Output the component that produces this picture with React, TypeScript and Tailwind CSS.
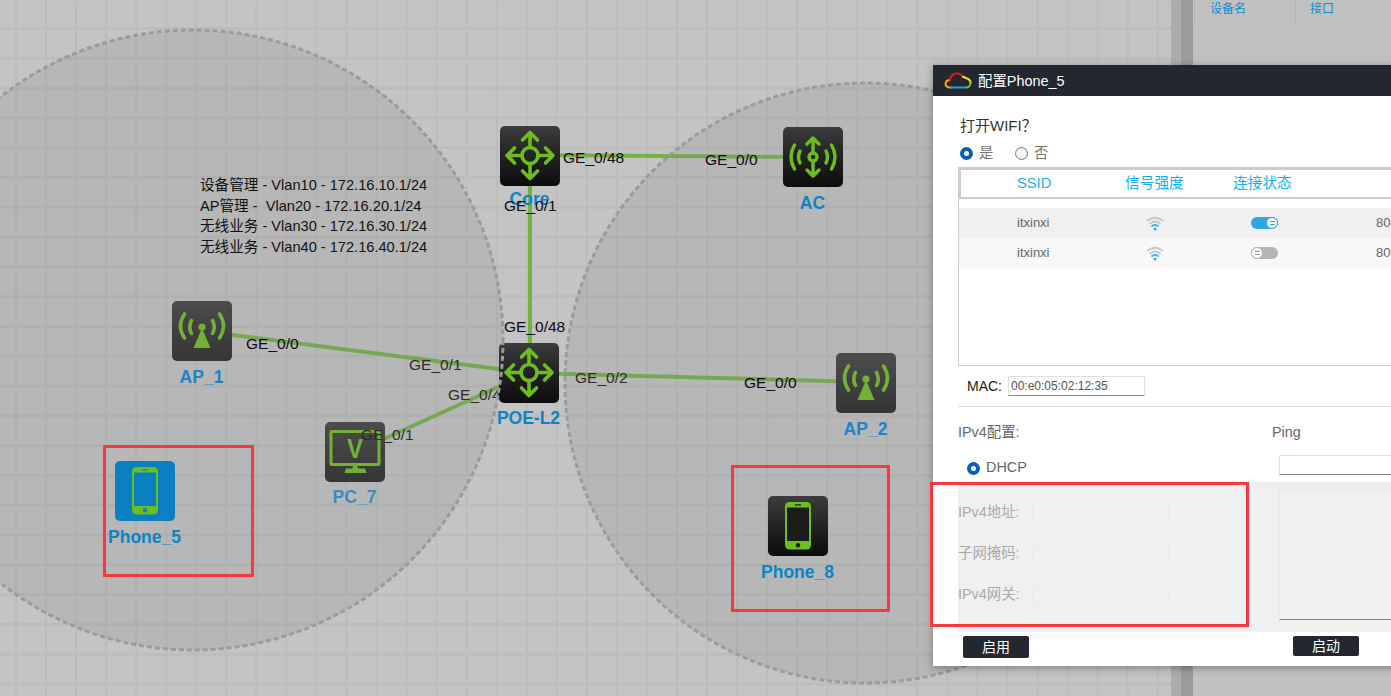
import React from "react";

const G = "#6ebd1f";
const cjk = "font-['Liberation_Sans','Noto_Sans_CJK_SC',sans-serif]";

function RouterGlyph() {
  return (
    <g fill="none" stroke={G} strokeWidth="3.6" strokeLinecap="round" strokeLinejoin="round">
      <circle cx="30" cy="29.500" r="8" />
      <path d="M30 21V7M22.500 14l7.500-7.500L37.500 14" />
      <path d="M30 38v14M22.500 45l7.500 7.500L37.500 45" />
      <path d="M21.500 29.500H7.500M14.500 22L7 29.500l7.500 7.500" />
      <path d="M38.500 29.500h14M45.500 22l7.500 7.500L45.500 37" />
    </g>
  );
}
function AcGlyph() {
  return (
    <g fill="none" stroke={G} strokeWidth="3.4" strokeLinecap="round" strokeLinejoin="round">
      <circle cx="30" cy="30" r="4" />
      <path d="M30 26V11M24 17l6-6 6 6M30 34v15M24 43l6 6 6-6" />
      <path d="M17 24q-3 6 0 12M11.500 18q-7 12 0 24" />
      <path d="M43 24q3 6 0 12M48.500 18q7 12 0 24" />
    </g>
  );
}
function ApGlyph() {
  return (
    <g>
      <circle cx="30" cy="26" r="3.600" fill={G} />
      <path d="M30 27l8.500 20h-17z" fill={G} />
      <g fill="none" stroke={G} strokeWidth="3.600" strokeLinecap="round">
        <path d="M19.500 19.500q-3.500 6.500 0 13M12.500 13q-8 12 0 24" />
        <path d="M40.500 19.500q3.500 6.500 0 13M47.500 13q8 12 0 24" />
      </g>
    </g>
  );
}
function PcGlyph() {
  return (
    <g>
      <rect x="6" y="9.500" width="48" height="33" rx="1" fill="none" stroke={G} strokeWidth="3" />
      <text transform="translate(30 36) scale(0.85 1)" textAnchor="middle" fontFamily="Liberation Sans" fontWeight="700" fontSize="28" fill={G}>V</text>
      <path d="M28 44h4l1.500 2.500H40l1.500 4.500h-22l1.500-4.500h6.500z" fill={G} />
    </g>
  );
}
function PhoneGlyph({ screen }: { screen: string }) {
  return (
    <g>
      <rect x="17" y="6" width="26" height="47.500" rx="4.500" fill={G} />
      <rect x="19" y="11.500" width="22" height="33.500" fill={screen} />
      <rect x="27" y="8.300" width="6" height="1.200" fill={screen} />
      <circle cx="30" cy="49.200" r="2.200" fill={screen} />
    </g>
  );
}

function Node({
  left, top, grad, children, label, labelTop, labelColor = "#0b84c6",
}: {
  left: number; top: number; grad: string; children: React.ReactNode; label: string; labelTop: number; labelColor?: string;
}) {
  return (
    <>
      <svg viewBox="0 0 60 60" width="60" height="60" className={`absolute rounded-[5px] ${grad}`} style={{ left, top }}>
        {children}
      </svg>
      <span
        className="absolute w-[120px] -translate-x-1/2 -translate-y-1/2 whitespace-nowrap text-center font-['Liberation_Sans',sans-serif] text-[17.500px] font-bold leading-none"
        style={{ left: left + 29.5, top: labelTop + 1, color: labelColor }}
      >
        {label}
      </span>
    </>
  );
}

function Port({ x, y, t, dim }: { x: number; y: number; t: string; dim?: boolean }) {
  return (
    <span
      className={`absolute -translate-y-1/2 whitespace-nowrap font-['Liberation_Sans',sans-serif] text-[15.500px] leading-none ${dim ? "text-[#2c2c2c]" : "text-[#0c0c12]"}`}
      style={{ left: x, top: y }}
    >
      {t}
    </span>
  );
}

function Radio({ on }: { on?: boolean }) {
  return on ? (
    <span className="inline-block h-[13px] w-[13px] shrink-0 rounded-full border-[4px] border-[#0a5fb4] bg-white" />
  ) : (
    <span className="inline-block h-[13px] w-[13px] shrink-0 rounded-full border border-[#777] bg-[#f3f3f3]" />
  );
}

function Wifi() {
  return (
    <svg width="18" height="15" viewBox="0 0 18 15" fill="none" strokeLinecap="round">
      <path d="M1.500 4.500Q9-1 16.500 4.500" stroke="#c8c8c8" strokeWidth="1.800" />
      <path d="M4 7.500Q9 3.500 14 7.500" stroke="#c8c8c8" strokeWidth="1.800" />
      <path d="M6 10Q9 8 12 10" stroke="#45b0ea" strokeWidth="1.800" />
      <circle cx="9" cy="13" r="1.500" fill="#2fa8e8" />
    </svg>
  );
}

function Toggle({ on }: { on?: boolean }) {
  return (
    <span className={`flex h-[12px] w-[27px] items-center rounded-full ${on ? "justify-end bg-[#2ea7e3]" : "justify-start bg-[#b4b4b4]"}`}>
      <span className={`flex h-[12px] w-[12px] flex-col items-center justify-center gap-[2px] rounded-full border bg-white ${on ? "border-[#2ea7e3]" : "border-[#b4b4b4]"}`}>
        <span className={`h-px w-[5px] ${on ? "bg-[#2ea7e3]" : "bg-[#999]"}`} />
        <span className={`h-px w-[5px] ${on ? "bg-[#2ea7e3]" : "bg-[#999]"}`} />
      </span>
    </span>
  );
}

function WifiRow({ on, bg }: { on?: boolean; bg: string }) {
  return (
    <div className={`flex h-[30px] items-center text-[13px] text-[#666] ${bg}`}>
      <span className="ml-[58px] w-[129px] shrink-0">itxinxi</span>
      <span className="w-[105px] shrink-0"><Wifi /></span>
      <span className="w-[125px] shrink-0"><Toggle on={on} /></span>
      <span className="text-[13px]">80</span>
    </div>
  );
}

function Field({ label }: { label: string }) {
  return (
    <div className="flex h-[41px] items-center">
      <span className="w-[74px] text-[14.400px] text-[#aaa]">{label}</span>
      <span className="h-[20px] w-[137px] border border-[#ebebeb] bg-[#f0f0f0]" />
    </div>
  );
}

function Dialog() {
  return (
    <div className={`absolute left-[933px] top-[65px] h-[601px] w-[520px] overflow-hidden bg-white shadow-[0_2px_8px_rgba(0,0,0,0.35)] ${cjk}`}>
      <div className="flex h-[31px] items-center bg-[#232730] pl-[11px]">
        <svg width="28" height="18" viewBox="0 0 28 18" fill="none" strokeWidth="2" strokeLinecap="round">
          <path d="M7 15.500H5.500Q1.500 15 1.500 11.500Q2 8 6 8" stroke="#f5a81c" />
          <path d="M6 8Q7 1.500 13 1.500Q17 1.500 19 5" stroke="#e8141c" />
          <path d="M19 5Q20.500 4.500 21.500 6Q26.500 7 26.500 11" stroke="#f5dc1c" />
          <path d="M26.500 11Q26.500 15 22 15.500" stroke="#86bb22" />
          <path d="M22 15.500H7" stroke="#2a9de0" />
        </svg>
        <span className="ml-[6px] pt-[2px] text-[14.400px] text-white">配置Phone_5</span>
      </div>
      <div className="flex flex-col pl-[25px]">
        <div className="mt-[21px] pl-[2px] text-[15px] leading-[18px] text-[#333]">打开WIFI？</div>
        <div className="mt-[10px] flex h-[16px] items-center pl-[2px] text-[14.400px] text-[#777]">
          <Radio on />
          <span className="ml-[6px] w-[36px] pt-[2px]">是</span>
          <Radio />
          <span className="ml-[6px] pt-[2px]">否</span>
        </div>
        <div className="mt-[6px] h-[199px] border border-[#ccc]">
          <div className="flex h-[31px] items-center border-2 border-r-0 border-[#ccc] bg-white text-[14.700px] text-[#12b0f5]">
            <span className="ml-[56px] w-[108px] shrink-0">SSID</span>
            <span className="w-[108px] shrink-0">信号强度</span>
            <span>连接状态</span>
          </div>
          <div className="mt-[9px]">
            <WifiRow on bg="bg-[#f0f0f0]" />
            <WifiRow bg="bg-[#f8f8f8]" />
          </div>
        </div>
        <div className="flex h-[41px] items-center border-b border-[#ddd] pl-[9px]">
          <span className="w-[41px] text-[14px] text-[#222]">MAC:</span>
          <span className="flex h-[20px] w-[137px] items-center border border-[#e0e0e0] border-b-[#888] pl-[2px] text-[12px] text-[#555]">00:e0:05:02:12:35</span>
        </div>
        <div className="flex h-[48px] items-center pt-[3px] text-[14.400px] text-[#666]">
          <span className="w-[314px] shrink-0">IPv4配置:</span>
          <span>Ping</span>
        </div>
        <div className="flex h-[28px] items-start">
          <span className="ml-[9px] mt-[3px] flex h-[20px] w-[312px] shrink-0 items-center text-[14.400px] text-[#666]">
            <Radio on />
            <span className="ml-[6px]">DHCP</span>
          </span>
          <span className="h-[20px] w-[160px] shrink-0 border border-[#e4e4e4] border-b-[#888]" />
        </div>
        <div className="mt-[-1px] flex h-[150px] bg-[#f0f0f0]">
          <div className="w-[321px] shrink-0 pt-[1px]">
            <div className="h-[9px]" />
            <Field label="IPv4地址:" />
            <Field label="子网掩码:" />
            <Field label="IPv4网关:" />
          </div>
          <div className="mt-[7px] h-[131px] w-[160px] shrink-0 border border-[#e8e8e8] border-b-[#888]" />
        </div>
        <div className="mt-[4px] flex items-start pl-[5px] text-[14px] text-white">
          <span className="flex h-[22px] w-[66px] shrink-0 items-center justify-center rounded-[2px] bg-[#232730]">启用</span>
          <span className="ml-[264px] flex h-[20px] w-[66px] shrink-0 items-center justify-center rounded-[2px] bg-[#232730]">启动</span>
        </div>
      </div>
    </div>
  );
}

function Canvas() {
  const dark = "bg-gradient-to-b from-[#3c3c3c] to-[#0c0c0c]";
  const dim = "bg-gradient-to-b from-[#3c3c3c] to-[#1e1e1e]";
  return (
    <div className="relative h-full flex-1 overflow-hidden bg-[#c4c4c4] bg-[linear-gradient(to_right,#bcbcbc_2px,transparent_2px),linear-gradient(to_bottom,#bcbcbc_3px,transparent_3px)] bg-[size:30.05px_29.8px] bg-[position:15px_27px]">
      <svg className="absolute left-0 top-0" width="1171" height="696" fill="none" stroke="#74b044" strokeWidth="4">
        <path d="M530 155L813 157M530 155V373M202 331L529 373M355 452L529 373M529 373L866 382" />
      </svg>
      <Node left={172} top={301} grad={dim} label="AP_1" labelTop={377} labelColor="#0082d9"><ApGlyph /></Node>
      <Node left={325} top={422} grad={dim} label="PC_7" labelTop={497} labelColor="#1a92d1"><PcGlyph /></Node>
      <Node left={836} top={353} grad={dim} label="AP_2" labelTop={429} labelColor="#0082d9"><ApGlyph /></Node>

      <svg className="absolute left-0 top-0" width="1171" height="696" fill="#888888" fillOpacity="0.22">
        <circle cx="193" cy="340" r="310" />
        <circle cx="865" cy="383" r="300" />
      </svg>

      <Port x={409} y={365} t="GE_0/1" dim />
      <Port x={448} y={395} t="GE_0/48" dim />
      <Port x={361} y={435} t="GE_0/1" dim />
      <Port x={575} y={378} t="GE_0/2" dim />

      <Node left={500} top={126} grad={dark} label="Core" labelTop={199}><RouterGlyph /></Node>
      <Node left={783} top={127} grad={dark} label="AC" labelTop={203}><AcGlyph /></Node>
      <Node left={499} top={343} grad={dark} label="POE-L2" labelTop={418}><RouterGlyph /></Node>
      <Node left={115} top={461} grad="bg-[#0a80c0]" label="Phone_5" labelTop={537}><PhoneGlyph screen="#0a80c0" /></Node>
      <Node left={768} top={496} grad={dark} label="Phone_8" labelTop={572}><PhoneGlyph screen="#1c1c1c" /></Node>

      <svg className="absolute left-0 top-0" width="1171" height="696" fill="none" stroke="#9b9b9b" strokeWidth="3" strokeDasharray="5 3">
        <circle cx="193" cy="340" r="310" />
        <circle cx="865" cy="383" r="300" />
      </svg>

      <Port x={563} y={158} t="GE_0/48" />
      <Port x={705} y={160} t="GE_0/0" />
      <Port x={504} y={206} t="GE_0/1" />
      <Port x={504} y={327} t="GE_0/48" />
      <Port x={246} y={344} t="GE_0/0" />
      <Port x={744} y={383} t="GE_0/0" />

      <div className={`absolute left-[200px] top-[175px] whitespace-pre text-[14.600px] leading-[20.700px] text-[#111] ${cjk}`}>
        <div>设备管理 - Vlan10 - 172.16.10.1/24</div>
        <div>AP管理 -  Vlan20 - 172.16.20.1/24</div>
        <div>无线业务 - Vlan30 - 172.16.30.1/24</div>
        <div>无线业务 - Vlan40 - 172.16.40.1/24</div>
      </div>
    </div>
  );
}

export default function App() {
  return (
    <div className="relative h-[696px] w-[1391px] overflow-hidden bg-[#c1c1c1]">
      <div className="flex h-full">
        <Canvas />
        <div className="flex h-full w-[22px] shrink-0">
          <div className="w-[10px] bg-[#adadad]" />
          <div className="w-[12px] bg-[#9c9c9c]" />
        </div>
        <div className={`flex h-[24px] w-[198px] shrink-0 text-[12px] text-[#0a8ecf] ${cjk}`}>
          <span className="ml-px h-full w-[101px] border-l border-[#b4b4b4] pl-[15px]">设备名</span>
          <span className="h-full border-l border-[#b4b4b4] pl-[14px]">接口</span>
        </div>
      </div>
      <Dialog />
      <div className="absolute left-[103px] top-[445px] h-[132px] w-[151px] border-[3px] border-[#f33b3b]" />
      <div className="absolute left-[731px] top-[465px] h-[147px] w-[159px] border-[3px] border-[#f33b3b]" />
      <div className="absolute left-[930px] top-[482px] h-[145px] w-[319px] border-[3px] border-[#f33b3b]" />
    </div>
  );
}
